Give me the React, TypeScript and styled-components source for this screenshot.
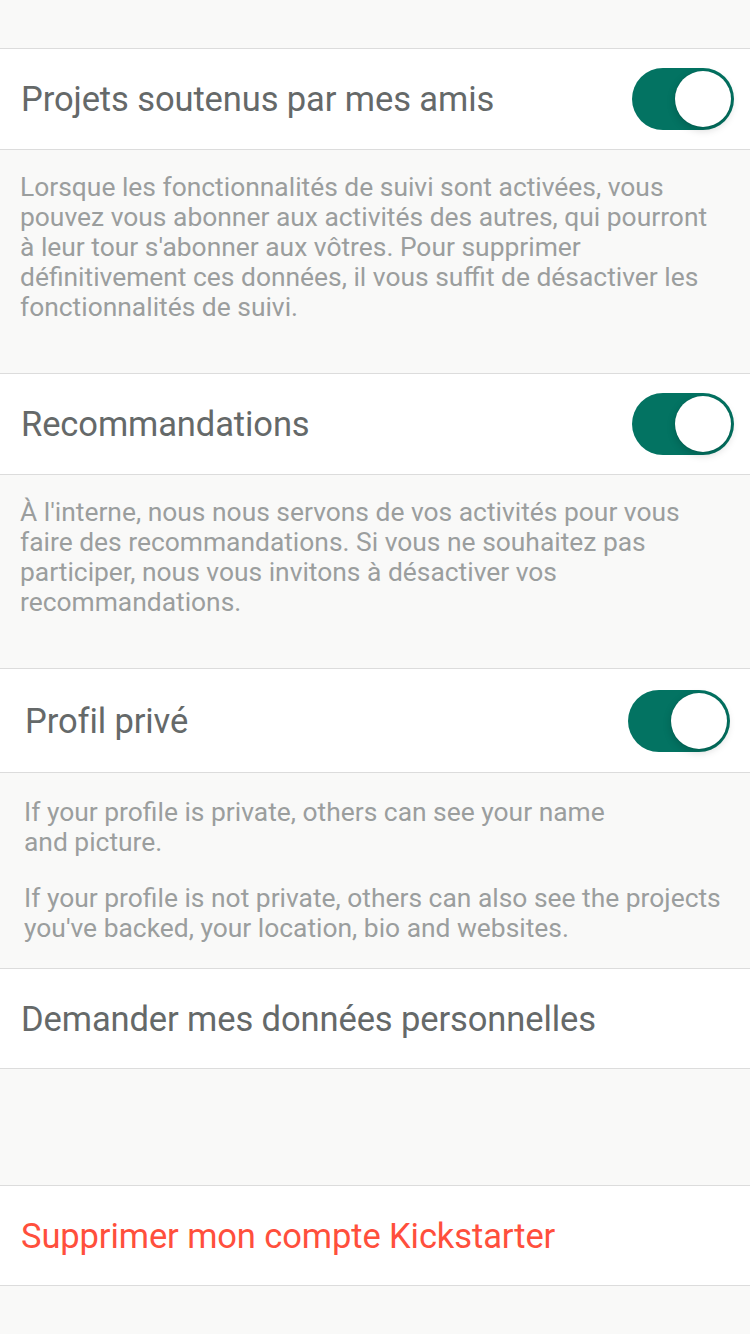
import React from "react";
import styled, { createGlobalStyle } from "styled-components";

const Global = createGlobalStyle`
  html, body { margin: 0; padding: 0; background: #f9f9f8; }
  body { font-family: Roboto, "Noto Sans", "Liberation Sans", sans-serif; -webkit-font-smoothing: antialiased; }
`;

const Page = styled.div`
  width: 750px;
  min-height: 1334px;
  background: #f9f9f8;
  padding-top: 48px;
  box-sizing: border-box;
`;

const Row = styled.div<{ $inset?: number; $h?: number }>`
  height: ${(p) => p.$h ?? 100}px;
  background: #ffffff;
  border-top: 1px solid #dcdcdc;
  border-bottom: 1px solid #dcdcdc;
  display: flex;
  align-items: center;
  justify-content: space-between;
  padding: 0 ${(p) => 16 + (p.$inset ?? 0)}px 0 ${(p) => 21 + (p.$inset ?? 0)}px;
  box-sizing: content-box;
  & + & { border-top: none; }
`;

const Title = styled.span<{ $danger?: boolean }>`
  font-size: 34.5px;
  color: ${(p) => (p.$danger ? "#ff4f3c" : "#656969")};
  letter-spacing: -0.1px;
`;

const Track = styled.div`
  width: 102px;
  height: 62px;
  border-radius: 31px;
  background: #037362;
  position: relative;
  flex-shrink: 0;
`;

const Knob = styled.div`
  position: absolute;
  right: 3px;
  top: 3px;
  width: 56px;
  height: 56px;
  border-radius: 50%;
  background: #fff;
  box-shadow: 0 3px 8px rgba(0, 0, 0, 0.18), 0 0 1px rgba(0, 0, 0, 0.2);
`;

const Desc = styled.div<{ $h: number; $inset?: number; $pt?: number }>`
  height: ${(p) => p.$h}px;
  padding: ${(p) => p.$pt ?? 22}px 28px 0 ${(p) => 20 + (p.$inset ?? 0)}px;
  box-sizing: border-box;
  font-size: 26.4px;
  line-height: 30px;
  color: #9b9e9e;
`;

const Para = styled.p`
  margin: 0;
  & + & { margin-top: 26px; }
`;

const Spacer = styled.div`
  height: 116px;
`;

const Toggle = () => (
  <Track>
    <Knob />
  </Track>
);

export default function App() {
  return (
    <Page>
      <Global />
      <Row>
        <Title>Projets soutenus par mes amis</Title>
        <Toggle />
      </Row>
      <Desc $h={223}>
        Lorsque les fonctionnalités de suivi sont activées, vous pouvez vous abonner aux activités des autres, qui pourront
        à leur tour s'abonner aux vôtres. Pour supprimer définitivement ces données, il vous suffit de désactiver les
        fonctionnalités de suivi.
      </Desc>
      <Row>
        <Title>Recommandations</Title>
        <Toggle />
      </Row>
      <Desc $h={193}>
        À l'interne, nous nous servons de vos activités pour vous faire des recommandations. Si vous ne souhaitez pas
        participer, nous vous invitons à désactiver vos recommandations.
      </Desc>
      <Row $inset={4} $h={103}>
        <Title>Profil privé</Title>
        <Toggle />
      </Row>
      <Desc $h={195} $inset={4} $pt={24}>
        <Para>
          If your profile is private, others can see your name
          <br />
          and picture.
        </Para>
        <Para>If your profile is not private, others can also see the projects you've backed, your location, bio and websites.</Para>
      </Desc>
      <Row $h={99}>
        <Title>Demander mes données personnelles</Title>
      </Row>
      <Spacer />
      <Row $h={99}>
        <Title $danger>Supprimer mon compte Kickstarter</Title>
      </Row>
    </Page>
  );
}
